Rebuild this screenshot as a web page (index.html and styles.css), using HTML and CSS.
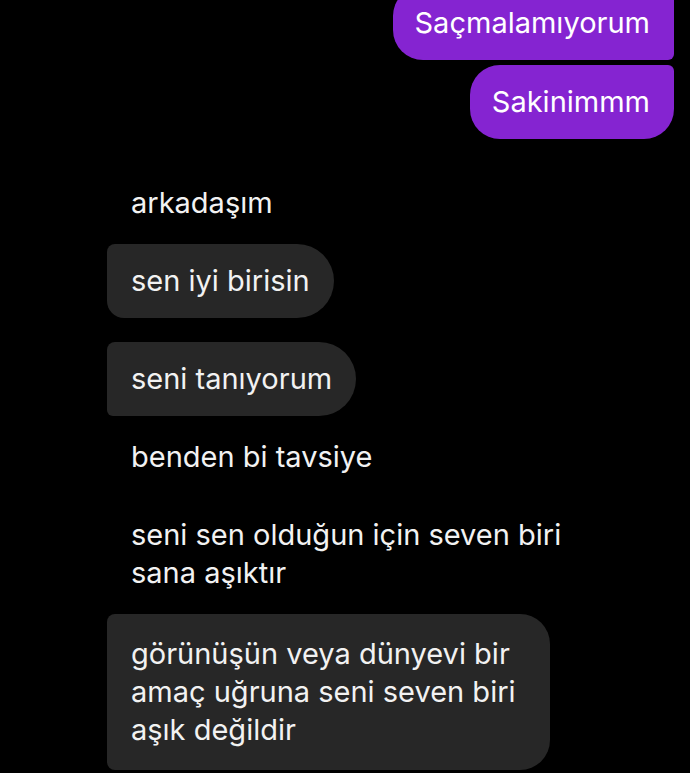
FILE: index.html
```html
<!DOCTYPE html>
<html lang="tr">
<head>
  <meta charset="UTF-8">
  <title>Sohbet</title>
  <link rel="stylesheet" href="styles.css">
</head>
<body>
  <div class="chat">
    <div class="msg out first">Saçmalamıyorum</div>
    <div class="msg out last">Sakinimmm</div>

    <div class="msg in plain new-sender">arkadaşım</div>
    <div class="msg in bubble group-end">sen iyi birisin</div>
    <div class="msg in bubble spaced">seni tanıyorum</div>
    <div class="msg in plain">benden bi tavsiye</div>
    <div class="msg in plain">seni sen olduğun için seven biri sana aşıktır</div>
    <div class="msg in bubble multi">görünüşün veya dünyevi bir amaç uğruna seni seven biri aşık değildir</div>
  </div>
</body>
</html>
```

FILE: styles.css
```css
html, body { margin: 0; background: #000; }
body { font-family: Inter, Roboto, sans-serif; color: #f2f2f2; overflow: hidden; }
.chat { display: flex; flex-direction: column; gap: 4px; padding: 0 16px 0 107px; width: 690px; height: 773px; box-sizing: border-box; }
.msg { font-size: 29px; line-height: 38px; padding: 18px 24px; box-sizing: border-box; width: fit-content; }

/* sent */
.out { align-self: flex-end; background: #8524d1; color: #fff; padding: 18px 24px 18px 22px; }
.out.first { margin-top: -14px; border-radius: 30px 6px 6px 30px; }
.out.last { margin-top: 1px; border-radius: 30px 6px 30px 30px; }

/* received */
.in { align-self: flex-start; max-width: 443px; }
.in.plain { max-width: 500px; }
.bubble { background: #272727; border-radius: 8px 37px 37px 6px; }
.bubble.group-end { border-radius: 8px 37px 37px 17px; }
.bubble.multi { padding: 21px 24px; border-radius: 8px 30px 30px 8px; }
.new-sender { margin-top: 23px; }
.spaced { margin-top: 20px; }
```
